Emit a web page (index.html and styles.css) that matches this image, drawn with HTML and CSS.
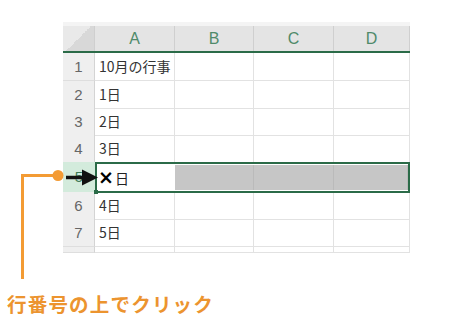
FILE: index.html
```html
<!DOCTYPE html>
<html>

<head>
    <title>行番号の上でクリック</title>
    <meta charset="utf-8">
    <link rel="stylesheet" href="styles.css">
</head>

<body>
    <div class="figura">
        <div class="hoja">
            <div class="fila cabecera">
                <div class="esquina"></div>
                <div class="col">A</div>
                <div class="col">B</div>
                <div class="col">C</div>
                <div class="col">D</div>
            </div>
            <div class="fila f28">
                <div class="num">1</div>
                <div class="celda">10月の行事</div>
                <div class="celda"></div>
                <div class="celda"></div>
                <div class="celda"></div>
            </div>
            <div class="fila">
                <div class="num">2</div>
                <div class="celda">1日</div>
                <div class="celda"></div>
                <div class="celda"></div>
                <div class="celda"></div>
            </div>
            <div class="fila">
                <div class="num">3</div>
                <div class="celda">2日</div>
                <div class="celda"></div>
                <div class="celda"></div>
                <div class="celda"></div>
            </div>
            <div class="fila">
                <div class="num">4</div>
                <div class="celda">3日</div>
                <div class="celda"></div>
                <div class="celda"></div>
                <div class="celda"></div>
            </div>
            <div class="fila sel">
                <div class="num activo">5</div>
                <div class="marco">
                    <div class="celda activa"><b class="cruz">×</b>日</div>
                    <div class="celda gris"></div>
                    <div class="celda gris"></div>
                    <div class="celda gris"></div>
                    <span class="asa"></span>
                </div>
            </div>
            <div class="fila">
                <div class="num">6</div>
                <div class="celda">4日</div>
                <div class="celda"></div>
                <div class="celda"></div>
                <div class="celda"></div>
            </div>
            <div class="fila f28">
                <div class="num">7</div>
                <div class="celda">5日</div>
                <div class="celda"></div>
                <div class="celda"></div>
                <div class="celda"></div>
            </div>
            <div class="fila corta">
                <div class="num"></div>
                <div class="celda"></div>
                <div class="celda"></div>
                <div class="celda"></div>
                <div class="celda"></div>
            </div>
        </div>

        <p class="nota">行番号の上でクリック</p>

        <!-- linea naranja y flecha -->
        <svg class="trazo" width="110" height="120" viewBox="0 0 110 120">
            <polyline points="22.5,120 22.5,16.5 58,16.5" fill="none" stroke="#f39b34" stroke-width="3" />
            <circle cx="58" cy="16.5" r="5.5" fill="#f39b34" />
            <line x1="66" y1="18.5" x2="84" y2="18.5" stroke="#111" stroke-width="3.5" />
            <polygon points="82,10.5 98,18.5 82,26.5" fill="#111" />
        </svg>
    </div>
</body>

</html>
```

FILE: styles.css
```css
body {
    margin: 0;
    font-family: "Noto Sans CJK JP", "Noto Sans", sans-serif;
    background-color: #ffffff;
}

.figura {
    position: relative;
    width: 453px;
    height: 332px;
    padding-top: 22px;
    box-sizing: border-box;
}

.hoja {
    margin-left: 63px;
    width: 347px;
    border-top: 4px solid #f4f4f4;
}

.fila {
    display: grid;
    grid-template-columns: 32px 80px 79px 80px 76px;
    height: 27px;
}

.f28 {
    height: 28px;
}

.corta {
    height: 6px;
    overflow: hidden;
}

.cabecera {
    height: 27px;
    background-color: #e4e4e4;
    border-bottom: 2px solid #2b6b48;
    box-sizing: border-box;
}

.esquina {
    background: linear-gradient(135deg, #e9e9e9 50%, #d8d8d8 50%);
    border-right: 1px solid #cfcfcf;
}

.col {
    text-align: center;
    color: #4f8a6a;
    font-family: "Liberation Sans", "Noto Sans", sans-serif;
    font-size: 16px;
    line-height: 25px;
    border-right: 1px solid #cfcfcf;
}

.num {
    background-color: #efefef;
    color: #666666;
    text-align: center;
    font-family: "Liberation Sans", "Noto Sans", sans-serif;
    font-size: 15px;
    line-height: 27px;
    border-right: 1px solid #d4d4d4;
    border-bottom: 1px solid #dedede;
    box-sizing: border-box;
}

.celda {
    color: #333333;
    font-size: 14px;
    line-height: 26px;
    padding-left: 4px;
    border-right: 1px solid #e2e2e2;
    border-bottom: 1px solid #e2e2e2;
    box-sizing: border-box;
    white-space: nowrap;
}

.sel {
    height: 30px;
}

.num.activo {
    background-color: #d3ebdc;
    color: #3d7a56;
    line-height: 30px;
    border-right: 0;
}

.marco {
    position: relative;
    grid-column: 2 / 6;
    display: grid;
    grid-template-columns: 78px 79px 80px 1fr;
    border: 2px solid #2b6b48;
    padding: 1px 0;
    box-sizing: border-box;
}

.marco .celda {
    border-bottom: 0;
    line-height: 24px;
}

.celda.activa {
    color: #222222;
    border-right: 0;
    padding-left: 1px;
}

.cruz {
    font-family: "DejaVu Sans", sans-serif;
    font-size: 19px;
    font-weight: bold;
    color: #000000;
    margin-right: 1px;
}

.celda.gris {
    background-color: #c6c6c6;
    border-right: 1px solid #bababa;
}

.asa {
    position: absolute;
    left: -3px;
    bottom: -3px;
    width: 4px;
    height: 4px;
    background-color: #2b6b48;
}

.nota {
    margin: 36px 0 0 7px;
    color: #ec942f;
    font-size: 19.5px;
    font-weight: bold;
    letter-spacing: 1.2px;
}

.trazo {
    position: absolute;
    left: 0;
    top: 159px;
}
```
